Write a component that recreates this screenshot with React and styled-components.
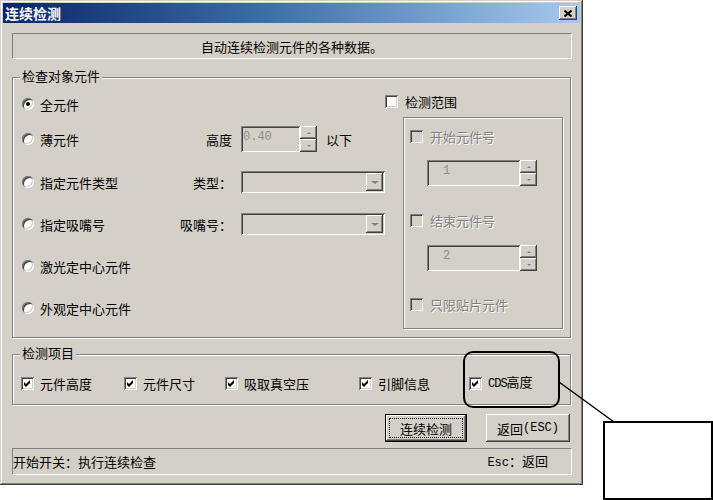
import React from 'react';
import styled, { createGlobalStyle } from 'styled-components';

const FACE = '#D4D0C8';
const SHADOW = '#808080';
const DARK = '#404040';

const GlobalStyle = createGlobalStyle`
  html, body {
    margin: 0;
    padding: 0;
    background: #fff;
  }
  body {
    font-family: "Noto Sans CJK SC", "Noto Sans", sans-serif;
    font-size: 13px;
    color: #000;
  }
`;

const raised = `
  box-shadow: inset -1px -1px 0 ${DARK}, inset 1px 1px 0 #fff,
    inset -2px -2px 0 ${SHADOW}, inset 2px 2px 0 ${FACE};
`;

const sunken = `
  box-shadow: inset 1px 1px 0 ${SHADOW}, inset -1px -1px 0 #fff,
    inset 2px 2px 0 ${DARK}, inset -2px -2px 0 ${FACE};
`;

const Stage = styled.div`
  position: relative;
  width: 713px;
  height: 500px;
  overflow: hidden;
`;

const Window = styled.div`
  width: 583px;
  height: 485px;
  box-sizing: border-box;
  padding: 3px;
  background: ${FACE};
  box-shadow: inset -1px -1px 0 ${DARK}, inset 1px 1px 0 ${FACE},
    inset -2px -2px 0 ${SHADOW}, inset 2px 2px 0 #fff;
  display: flex;
  flex-direction: column;
`;

const TitleBar = styled.div`
  height: 20px;
  flex: none;
  display: flex;
  align-items: center;
  justify-content: space-between;
  padding: 0 3px 0 2px;
  background: linear-gradient(90deg, #0a246a 0%, #3a6ea5 45%, #a6caf0 100%);
`;

const Title = styled.span`
  color: #fff;
  font-weight: bold;
  font-size: 14px;
  line-height: 20px;
`;

const CloseButton = styled.span`
  width: 18px;
  height: 14px;
  background: ${FACE};
  ${raised}
  display: flex;
  align-items: center;
  justify-content: center;
`;

const Content = styled.div`
  display: flex;
  flex-direction: column;
  padding: 0 8px 0 9px;
`;

const MessageBox = styled.div`
  margin-top: 10px;
  height: 26px;
  box-sizing: border-box;
  border: 1px solid;
  border-color: ${SHADOW} #fff #fff ${SHADOW};
  display: flex;
  align-items: center;
  justify-content: center;
  line-height: 15px;
`;

const GroupBox = styled.div`
  margin-top: ${p => p.$top || 0}px;
  margin-left: ${p => p.$left || 0}px;
  margin-right: 1px;
  width: ${p => (p.$w ? `${p.$w}px` : 'auto')};
  height: ${p => p.$h}px;
  box-sizing: border-box;
  border: 1px solid ${SHADOW};
  box-shadow: 1px 1px 0 #fff, inset 1px 1px 0 #fff;
  display: flex;
  flex-direction: column;
`;

const Legend = styled.span`
  display: block;
  width: fit-content;
  margin: -10px 0 0 7px;
  padding: 0 2px;
  height: 15px;
  line-height: 15px;
  background: ${FACE};
`;

const TargetBody = styled.div`
  display: flex;
`;

const OptionColumn = styled.div`
  width: 363px;
  padding-left: 9px;
  display: flex;
  flex-direction: column;
`;

const OptionRow = styled.div`
  display: grid;
  grid-template-columns: 141px 60px auto;
  column-gap: 9px;
  align-items: center;
  height: 26px;
  margin-top: ${p => p.$gap}px;
`;

const Choice = styled.label`
  display: flex;
  align-items: center;
  gap: 6px;
  line-height: 15px;
  white-space: nowrap;
`;

const RadioDot = styled.span`
  width: 12px;
  height: 12px;
  flex: none;
  border-radius: 50%;
  background: #fff;
  ${sunken}
  display: flex;
  align-items: center;
  justify-content: center;
  &::after {
    content: '';
    display: ${p => (p.$on ? 'block' : 'none')};
    width: 4px;
    height: 4px;
    border-radius: 50%;
    background: #000;
  }
`;

const FieldLabel = styled.span`
  justify-self: end;
  white-space: nowrap;
  line-height: 15px;
`;

const FieldLine = styled.div`
  display: flex;
  align-items: center;
  gap: 9px;
`;

const SpinGroup = styled.div`
  display: flex;
  margin-left: ${p => p.$left || 0}px;
  margin-top: ${p => p.$top || 0}px;
`;

const Field = styled.div`
  width: ${p => p.$w}px;
  height: 26px;
  box-sizing: border-box;
  padding: 4px 0 0 ${p => p.$pad}px;
  background: ${FACE};
  ${sunken}
  font-family: "Liberation Mono", monospace;
  font-size: 12px;
  line-height: 14px;
  color: #8c8c8c;
`;

const Spin = styled.div`
  width: 17px;
  height: 26px;
  display: flex;
  flex-direction: column;
`;

const SpinButton = styled.span`
  flex: 1;
  background: ${FACE};
  ${raised}
  display: flex;
  align-items: center;
  justify-content: center;
`;

const Arrow = styled.span`
  width: 0;
  height: 0;
  border-left: ${p => p.$size}px solid transparent;
  border-right: ${p => p.$size}px solid transparent;
  ${p => (p.$up ? 'border-bottom' : 'border-top')}: ${p => p.$size - (p.$size > 2 ? 1 : 0)}px solid ${SHADOW};
`;

const Combo = styled.div`
  width: 144px;
  height: 22px;
  box-sizing: border-box;
  padding: 2px;
  background: ${FACE};
  ${sunken}
  display: flex;
  justify-content: flex-end;
`;

const ComboButton = styled.span`
  width: 17px;
  height: 18px;
  background: ${FACE};
  ${raised}
  display: flex;
  align-items: center;
  justify-content: center;
`;

const RangeColumn = styled.div`
  width: 179px;
  padding-top: 11px;
  display: flex;
  flex-direction: column;
`;

const CheckRow = styled.label`
  display: flex;
  align-items: center;
  gap: ${p => p.$gap || 7}px;
  height: 14px;
  margin-top: ${p => p.$top || 0}px;
  line-height: 15px;
  white-space: nowrap;
  color: ${p => (p.$disabled ? SHADOW : '#000')};
  text-shadow: ${p => (p.$disabled ? '1px 1px 0 #fff' : 'none')};
`;

const CheckBox = styled.span`
  width: 13px;
  height: 13px;
  flex: none;
  background: ${p => (p.$disabled ? FACE : '#fff')};
  ${sunken}
  display: flex;
  align-items: center;
  justify-content: center;
`;

const RangeBody = styled.div`
  padding-left: 6px;
  display: flex;
  flex-direction: column;
`;

const ItemsRow = styled.div`
  margin-top: 16px;
  padding-left: 8px;
  display: grid;
  grid-template-columns: 103px 101px 134px 110px auto;
`;

const Mono = styled.span`
  font-family: "Liberation Mono", monospace;
  font-size: ${p => p.$size}px;
  letter-spacing: ${p => p.$track || 0}px;
`;

const ButtonRow = styled.div`
  margin-top: 9px;
  padding-right: 2px;
  display: flex;
  justify-content: flex-end;
  gap: 19px;
`;

const PushButton = styled.button`
  width: ${p => p.$w}px;
  height: 28px;
  box-sizing: border-box;
  padding: 0;
  margin: 0;
  border: ${p => (p.$default ? '1px solid #000' : 'none')};
  background: ${FACE};
  ${raised}
  font: inherit;
  font-size: 13px;
  line-height: 15px;
  color: #000;
  display: flex;
  align-items: stretch;
  justify-content: center;
`;

const FocusRing = styled.span`
  flex: 1;
  margin: 3px;
  border: 1px dotted ${p => (p.$show ? '#000' : 'transparent')};
  display: flex;
  align-items: center;
  justify-content: center;
`;

const StatusBar = styled.div`
  margin-top: 6px;
  height: 27px;
  box-sizing: border-box;
  border: 1px solid;
  border-color: ${SHADOW} #fff #fff ${SHADOW};
  padding: 0 23px 0 0;
  display: flex;
  align-items: center;
  justify-content: space-between;
  line-height: 15px;
`;

const Callout = styled.div`
  position: absolute;
  inset: 0;
  pointer-events: none;
`;

const Highlight = styled.div`
  position: absolute;
  left: 463px;
  top: 351px;
  width: 97px;
  height: 57px;
  box-sizing: border-box;
  border: 2px solid #000;
  border-radius: 10px;
`;

const NoteBox = styled.div`
  position: absolute;
  left: 603px;
  top: 421px;
  width: 110px;
  height: 79px;
  box-sizing: border-box;
  border: 2px solid #000;
  background: #fff;
`;

const Leader = styled.svg`
  position: absolute;
  left: 0;
  top: 0;
`;

const Check = ({ on, disabled }) => (
  <CheckBox $disabled={disabled}>
    {on && (
      <svg width="7" height="7" viewBox="0 0 7 7">
        <polygon points="0,2 2,4 6,0 6,3 2,7 0,5" fill="#000" />
      </svg>
    )}
  </CheckBox>
);

const SpinButtons = () => (
  <Spin>
    <SpinButton><Arrow $up $size={2} /></SpinButton>
    <SpinButton><Arrow $size={2} /></SpinButton>
  </Spin>
);

const ComboBox = () => (
  <Combo>
    <ComboButton><Arrow $size={4} /></ComboButton>
  </Combo>
);

const App = () => (
  <Stage>
    <GlobalStyle />
    <Window>
      <TitleBar>
        <Title>连续检测</Title>
        <CloseButton>
          <svg width="8" height="7" viewBox="0 0 8 7">
            <path d="M0.5 0.5 L7.5 6.5 M7.5 0.5 L0.5 6.5" stroke="#000" strokeWidth="2" />
          </svg>
        </CloseButton>
      </TitleBar>

      <Content>
        <MessageBox>自动连续检测元件的各种数据。</MessageBox>

        <GroupBox $top={18} $h={261}>
          <Legend>检查对象元件</Legend>
          <TargetBody>
            <OptionColumn>
              <OptionRow $gap={8}>
                <Choice><RadioDot $on />全元件</Choice>
              </OptionRow>
              <OptionRow $gap={9}>
                <Choice><RadioDot />薄元件</Choice>
                <FieldLabel>高度</FieldLabel>
                <FieldLine>
                  <SpinGroup>
                    <Field $w={59} $pad={2}>0.40</Field>
                    <SpinButtons />
                  </SpinGroup>
                  <span>以下</span>
                </FieldLine>
              </OptionRow>
              <OptionRow $gap={17}>
                <Choice><RadioDot />指定元件类型</Choice>
                <FieldLabel>类型：</FieldLabel>
                <ComboBox />
              </OptionRow>
              <OptionRow $gap={16}>
                <Choice><RadioDot />指定吸嘴号</Choice>
                <FieldLabel>吸嘴号：</FieldLabel>
                <ComboBox />
              </OptionRow>
              <OptionRow $gap={16}>
                <Choice><RadioDot />激光定中心元件</Choice>
              </OptionRow>
              <OptionRow $gap={16}>
                <Choice><RadioDot />外观定中心元件</Choice>
              </OptionRow>
            </OptionColumn>

            <RangeColumn>
              <CheckRow>
                <Check />检测范围
              </CheckRow>
              <GroupBox $top={9} $left={18} $w={160} $h={212}>
                <RangeBody>
                  <CheckRow $disabled $top={11}>
                    <Check disabled />开始元件号
                  </CheckRow>
                  <SpinGroup $left={17} $top={17}>
                    <Field $w={93} $pad={16}>1</Field>
                    <SpinButtons />
                  </SpinGroup>
                  <CheckRow $disabled $top={27}>
                    <Check disabled />结束元件号
                  </CheckRow>
                  <SpinGroup $left={17} $top={18}>
                    <Field $w={93} $pad={16}>2</Field>
                    <SpinButtons />
                  </SpinGroup>
                  <CheckRow $disabled $top={26}>
                    <Check disabled />只限贴片元件
                  </CheckRow>
                </RangeBody>
              </GroupBox>
            </RangeColumn>
          </TargetBody>
        </GroupBox>

        <GroupBox $top={16} $h={51}>
          <Legend>检测项目</Legend>
          <ItemsRow>
            <CheckRow $gap={6}><Check on />元件高度</CheckRow>
            <CheckRow $gap={6}><Check on />元件尺寸</CheckRow>
            <CheckRow $gap={6}><Check on />吸取真空压</CheckRow>
            <CheckRow $gap={6}><Check on />引脚信息</CheckRow>
            <CheckRow $gap={6}><Check on /><span><Mono $size={12} $track={-1}>CDS</Mono>高度</span></CheckRow>
          </ItemsRow>
        </GroupBox>

        <ButtonRow>
          <PushButton $default $w={82}>
            <FocusRing $show>连续检测</FocusRing>
          </PushButton>
          <PushButton $w={84}>
            <FocusRing>返回<Mono $size={12}>(ESC)</Mono></FocusRing>
          </PushButton>
        </ButtonRow>

        <StatusBar>
          <span>开始开关：执行连续检查</span>
          <span><Mono $size={12}>Esc</Mono>：返回</span>
        </StatusBar>
      </Content>
    </Window>

    <Callout>
      <Highlight />
      <Leader width="713" height="500" viewBox="0 0 713 500">
        <line x1="559" y1="382" x2="614" y2="422" stroke="#000" strokeWidth="1.5" />
      </Leader>
      <NoteBox />
    </Callout>
  </Stage>
);

export default App;
